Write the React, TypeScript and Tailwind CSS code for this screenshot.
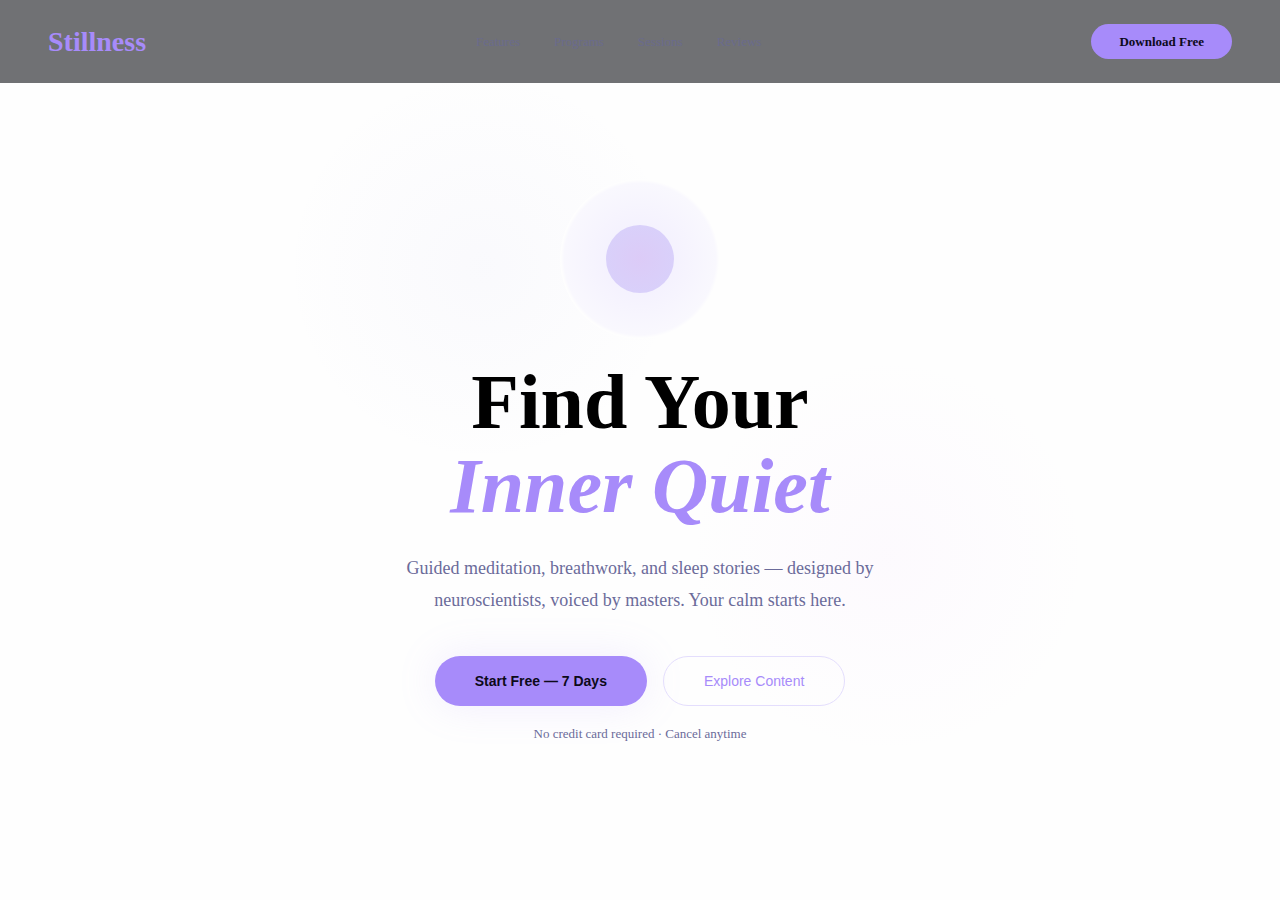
const links = ["Features", "Programs", "Sessions", "Reviews"];

export default function App() {
  return (
    <div className="flex min-h-screen flex-col bg-[#fefefe] font-['Liberation_Serif',serif] text-[#6b6b9a]">
      <header className="flex items-center justify-between bg-[#707174] px-12 py-6">
        <a href="#" className="text-[28px] leading-8 font-bold text-[#a78bfa]">Stillness</a>
        <nav className="flex gap-[34px] text-[13px] text-[#6a6b8c]">
          {links.map((l) => (
            <a key={l} href="#">{l}</a>
          ))}
        </nav>
        <button className="rounded-full bg-[#a78bfa] px-7 py-2 text-[13px] leading-[19px] font-bold text-[#0d0a1a]">
          Download Free
        </button>
      </header>
      <main className="relative isolate flex flex-1 flex-col items-center overflow-hidden px-6 pt-24 pb-36 text-center">
        <div className="absolute -top-4 left-[22%] -z-10 size-[400px] rounded-full bg-[radial-gradient(circle,rgba(129,130,220,0.035),transparent_70%)]" />
        <div className="absolute right-[15%] bottom-36 -z-10 size-[400px] rounded-full bg-[radial-gradient(circle,rgba(230,171,252,0.05),transparent_70%)]" />
        <div className="flex size-40 items-center justify-center rounded-full bg-[radial-gradient(circle,#f1edfe,#f9f8fe_67%,#fefefe_70%)]">
          <div className="size-[68px] rounded-full bg-[radial-gradient(circle,#dccbf7,#d9d0fa_70%)]" />
        </div>
        <h1 className="mt-[21px] text-[78px] leading-[84px] font-bold text-black">
          Find Your
          <br />
          <em className="text-[#a78bfa]">Inner Quiet</em>
        </h1>
        <p className="mt-6 max-w-[480px] text-lg leading-8">
          Guided meditation, breathwork, and sleep stories — designed by neuroscientists, voiced by masters. Your calm starts here.
        </p>
        <div className="mt-10 flex flex-wrap justify-center gap-4 font-['Liberation_Sans',sans-serif] text-sm">
          <button className="h-[50px] rounded-full bg-[#a78bfa] px-10 font-bold text-[#0d0a1a] shadow-[0_0_40px_rgba(167,139,250,0.15)]">
            Start Free — 7 Days
          </button>
          <button className="h-[50px] rounded-full border border-[#e4defd] px-10 text-[#a78bfa]">
            Explore Content
          </button>
        </div>
        <p className="mt-4 text-[13px] leading-6">No credit card required · Cancel anytime</p>
      </main>
    </div>
  );
}
